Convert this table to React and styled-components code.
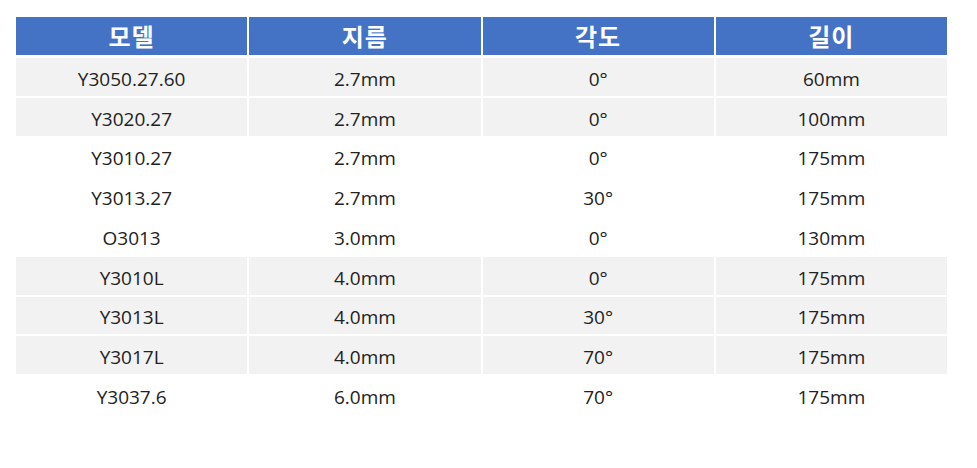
import React from "react";
import styled, { createGlobalStyle } from "styled-components";

const Global = createGlobalStyle`
  html, body { margin: 0; padding: 0; background: #ffffff; }
  body { font-family: "Open Sans", "Noto Sans CJK KR", sans-serif; }
`;

const Page = styled.div`
  padding: 17px 0 0 16px;
`;

const Table = styled.div`
  width: 931px;
  display: grid;
  grid-template-columns: repeat(4, 1fr);
  grid-template-rows: 39px;
  grid-auto-rows: 37.75px;
  column-gap: 2px;
  row-gap: 2px;
`;

const HeadCell = styled.div`
  height: 38px;
  background: #4472c4;
  color: #ffffff;
  display: flex;
  align-items: center;
  justify-content: center;
  font-family: "Noto Sans CJK KR", sans-serif;
  font-weight: 700;
  font-size: 24px;
  letter-spacing: 1px;
  padding-bottom: 2px;
  box-sizing: border-box;
`;

const Cell = styled.div`
  background: ${(p) => (p.$shaded ? "#f2f2f2" : "#ffffff")};
  color: #222222;
  display: flex;
  align-items: center;
  justify-content: center;
  font-family: "Open Sans", sans-serif;
  font-size: 19px;
  padding-top: 4px;
  box-sizing: border-box;
`;

const headers = ["모델", "지름", "각도", "길이"];
const rows = [
  ["Y3050.27.60", "2.7mm", "0°", "60mm", true],
  ["Y3020.27", "2.7mm", "0°", "100mm", true],
  ["Y3010.27", "2.7mm", "0°", "175mm", false],
  ["Y3013.27", "2.7mm", "30°", "175mm", false],
  ["O3013", "3.0mm", "0°", "130mm", false],
  ["Y3010L", "4.0mm", "0°", "175mm", true],
  ["Y3013L", "4.0mm", "30°", "175mm", true],
  ["Y3017L", "4.0mm", "70°", "175mm", true],
  ["Y3037.6", "6.0mm", "70°", "175mm", false],
];

export default function App() {
  return (
    <Page>
      <Global />
      <Table>
        {headers.map((h) => (
          <HeadCell key={h}>{h}</HeadCell>
        ))}
        {rows.map((r, i) =>
          r.slice(0, 4).map((v, j) => (
            <Cell key={i + "-" + j} $shaded={r[4]}>
              {v}
            </Cell>
          ))
        )}
      </Table>
    </Page>
  );
}
